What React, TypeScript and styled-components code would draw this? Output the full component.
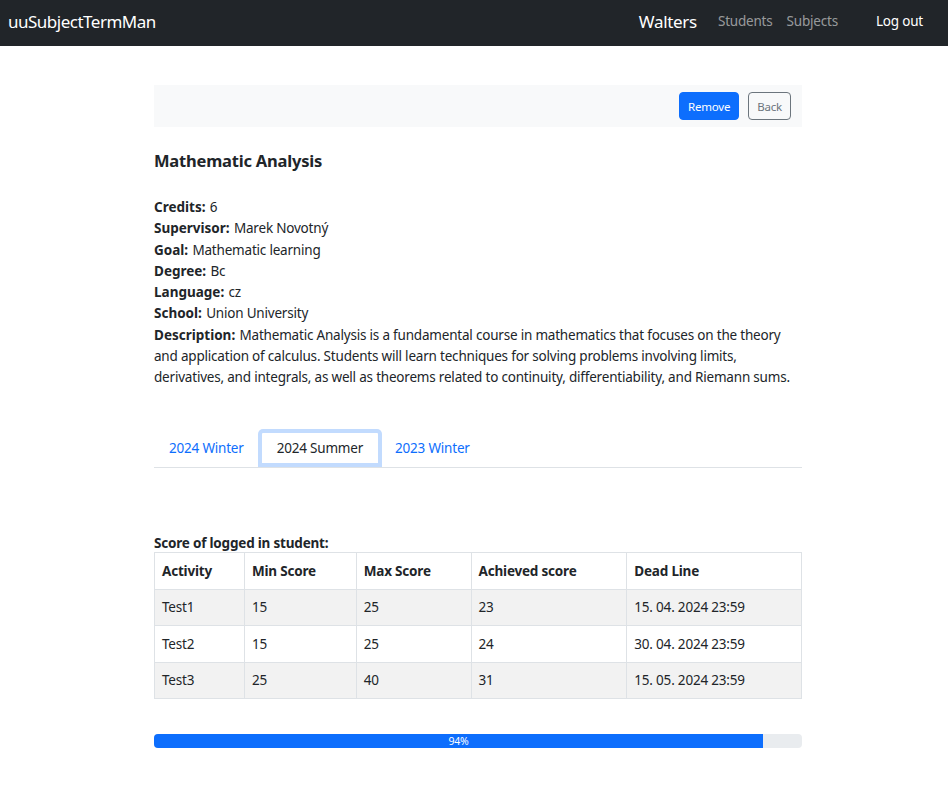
import React from "react";
import styled, { createGlobalStyle } from "styled-components";

const Global = createGlobalStyle`
  html, body { margin: 0; padding: 0; background: #fff; }
  body {
    font-family: "Noto Sans", "Open Sans", sans-serif;
    color: #212529;
    font-size: 14px;
  }
  * { box-sizing: border-box; }
`;

const Navbar = styled.nav`
  height: 46px;
  background: #212529;
  display: flex;
  align-items: center;
  padding: 0 8px 4px;
`;

const Brand = styled.div`
  color: #fff;
  font-size: 17px;
  letter-spacing: -0.5px;
  flex: 1;
`;

const NavRight = styled.div`
  display: flex;
  align-items: center;
  margin-right: 17px;
`;

const User = styled.span`
  color: #fff;
  font-size: 17px;
  letter-spacing: -0.3px;
  margin-right: 21px;
`;

const NavLink = styled.span<{ $active?: boolean }>`
  color: ${(p) => (p.$active ? "#fff" : "rgba(255,255,255,0.55)")};
  font-size: 13.5px;
  letter-spacing: -0.2px;
  margin-right: ${(p) => (p.$active ? "0" : "14px")};
  margin-left: ${(p) => (p.$active ? "24px" : "0")};
`;

const Main = styled.main`
  width: 648px;
  margin: 39px 0 0 154px;
  letter-spacing: -0.2px;
`;

const ActionBar = styled.div`
  height: 42px;
  background: #f8f9fa;
  display: flex;
  justify-content: flex-end;
  align-items: center;
  gap: 9px;
  padding-right: 11px;
`;

const Btn = styled.button<{ $variant: "primary" | "outline" }>`
  height: 28px;
  padding: 0 8px;
  font-family: inherit;
  font-size: 11.5px;
  letter-spacing: -0.2px;
  border-radius: 4px;
  border: 1px solid ${(p) => (p.$variant === "primary" ? "#0d6efd" : "#6c757d")};
  background: ${(p) => (p.$variant === "primary" ? "#0d6efd" : "transparent")};
  color: ${(p) => (p.$variant === "primary" ? "#fff" : "#6c757d")};
`;

const Title = styled.h2`
  font-size: 16.5px;
  font-weight: 700;
  margin: 23px 0 0;
  line-height: 22px;
`;

const Details = styled.div`
  margin-top: 25px;
  font-size: 13.5px;
  line-height: 21.3px;
`;

const Label = styled.b`
  font-weight: 700;
  letter-spacing: 0;
  margin-right: 1px;
`;

const Tabs = styled.div`
  margin-top: 40px;
  display: flex;
  border-bottom: 1px solid #dee2e6;
  height: 39px;
`;

const Tab = styled.div<{ $active?: boolean }>`
  padding: 0 15px;
  display: flex;
  align-items: center;
  font-size: 13.5px;
  color: ${(p) => (p.$active ? "#212529" : "#0d6efd")};
  border-radius: 5px 5px 0 0;
  ${(p) =>
    p.$active
      ? `background:#fff; box-shadow: 0 0 0 4px #c2dbfe inset; padding: 0 19px; margin: 0 -2px 0 -1px;`
      : ""}
`;

const Caption = styled.div`
  margin-top: 66px;
  font-weight: 700;
  font-size: 13.5px;
  line-height: 18px;
`;

const Table = styled.table`
  width: 100%;
  border-collapse: collapse;
  font-size: 13.5px;
`;

const Th = styled.th<{ $w: number }>`
  width: ${(p) => p.$w}px;
  text-align: left;
  font-weight: 700;
  height: 37px;
  padding: 0 7px;
  border: 1px solid #dee2e6;
`;

const Tr = styled.tr<{ $striped?: boolean }>`
  background: ${(p) => (p.$striped ? "#f2f2f2" : "#fff")};
`;

const Td = styled.td`
  height: 36.5px;
  padding: 0 7px;
  border: 1px solid #dee2e6;
`;

const Progress = styled.div`
  margin-top: 35px;
  height: 14px;
  background: #e9ecef;
  border-radius: 4px;
  overflow: hidden;
  display: flex;
`;

const Bar = styled.div`
  background: #0d6efd;
  color: #fff;
  font-size: 10.5px;
  display: flex;
  align-items: center;
  justify-content: center;
`;

const rows = [
  ["Test1", "15", "25", "23", "15. 04. 2024 23:59"],
  ["Test2", "15", "25", "24", "30. 04. 2024 23:59"],
  ["Test3", "25", "40", "31", "15. 05. 2024 23:59"],
];

export default function App() {
  const pct = 94;
  return (
    <>
      <Global />
      <Navbar>
        <Brand>uuSubjectTermMan</Brand>
        <NavRight>
          <User>Walters</User>
          <NavLink>Students</NavLink>
          <NavLink>Subjects</NavLink>
          <NavLink $active>Log out</NavLink>
        </NavRight>
      </Navbar>
      <Main>
        <ActionBar>
          <Btn $variant="primary">Remove</Btn>
          <Btn $variant="outline">Back</Btn>
        </ActionBar>
        <Title>Mathematic Analysis</Title>
        <Details>
          <div><Label>Credits:</Label> 6</div>
          <div><Label>Supervisor:</Label> Marek Novotný</div>
          <div><Label>Goal:</Label> Mathematic learning</div>
          <div><Label>Degree:</Label> Bc</div>
          <div><Label>Language:</Label> cz</div>
          <div><Label>School:</Label> Union University</div>
          <div>
            <Label>Description:</Label> Mathematic Analysis is a fundamental course in mathematics that focuses on the theory and application of calculus. Students will learn techniques for solving problems involving limits, derivatives, and integrals, as well as theorems related to continuity, differentiability, and Riemann sums.
          </div>
        </Details>
        <Tabs>
          <Tab>2024 Winter</Tab>
          <Tab $active>2024 Summer</Tab>
          <Tab>2023 Winter</Tab>
        </Tabs>
        <Caption>Score of logged in student:</Caption>
        <Table>
          <thead>
            <tr>
              <Th $w={90}>Activity</Th>
              <Th $w={112}>Min Score</Th>
              <Th $w={115}>Max Score</Th>
              <Th $w={156}>Achieved score</Th>
              <Th $w={175}>Dead Line</Th>
            </tr>
          </thead>
          <tbody>
            {rows.map((r, i) => (
              <Tr key={i} $striped={i % 2 === 0}>
                {r.map((c, j) => (
                  <Td key={j}>{c}</Td>
                ))}
              </Tr>
            ))}
          </tbody>
        </Table>
        <Progress>
          <Bar style={{ width: `${pct}%` }}>{pct}%</Bar>
        </Progress>
      </Main>
    </>
  );
}
